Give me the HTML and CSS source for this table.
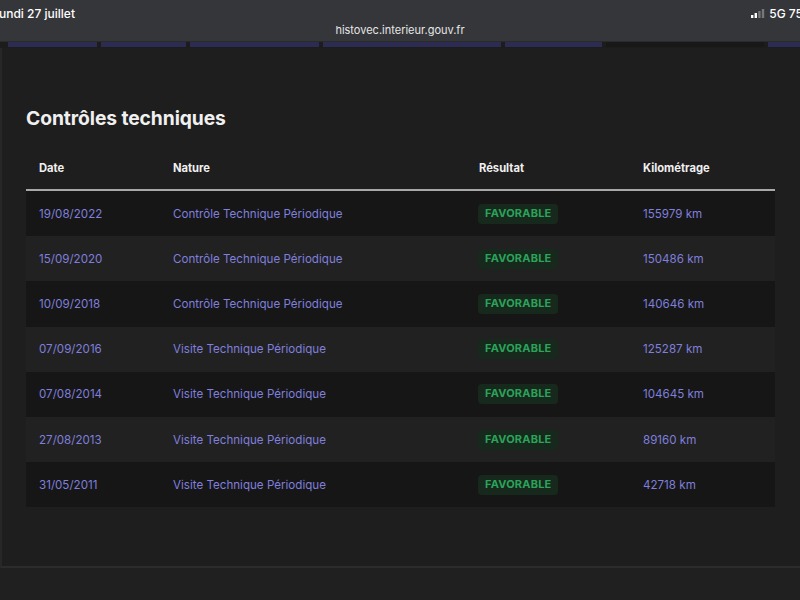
FILE: index.html
```html
<!DOCTYPE html>
<html lang="fr">
<head>
<meta charset="utf-8">
<title>HistoVec</title>
<link rel="stylesheet" href="styles.css">
</head>
<body>
<div class="status">
  <div class="status-row">
    <span class="date">undi 27 juillet</span>
    <span class="net">
      <svg class="bars" width="14" height="9" viewBox="0 0 14 9">
        <rect x="0" y="6" width="2.4" height="3" fill="#fff"/>
        <rect x="3.6" y="4" width="2.4" height="5" fill="#fff"/>
        <rect x="7.2" y="2" width="2.4" height="7" fill="#777"/>
        <rect x="10.8" y="0" width="2.4" height="9" fill="#777"/>
      </svg>
      5G 75
    </span>
  </div>
  <div class="url">histovec.interieur.gouv.fr</div>
</div>
<div class="tabs">
  <div class="tab t1"></div>
  <div class="tab t2"></div>
  <div class="tab t3"></div>
  <div class="tab t4"></div>
  <div class="tab t5"></div>
  <div class="tab off"></div>
  <div class="tab t6"></div>
</div>
<main class="panel">
  <h2 class="title">Contrôles techniques</h2>
  <table class="ct">
    <thead>
      <tr><th class="c1">Date</th><th class="c2">Nature</th><th class="c3">Résultat</th><th class="c4">Kilométrage</th></tr>
    </thead>
    <tbody>
      <tr><td>19/08/2022</td><td>Contrôle Technique Périodique</td><td><span class="badge">FAVORABLE</span></td><td>155979 km</td></tr>
      <tr><td>15/09/2020</td><td>Contrôle Technique Périodique</td><td><span class="badge">FAVORABLE</span></td><td>150486 km</td></tr>
      <tr><td>10/09/2018</td><td>Contrôle Technique Périodique</td><td><span class="badge">FAVORABLE</span></td><td>140646 km</td></tr>
      <tr><td>07/09/2016</td><td>Visite Technique Périodique</td><td><span class="badge">FAVORABLE</span></td><td>125287 km</td></tr>
      <tr><td>07/08/2014</td><td>Visite Technique Périodique</td><td><span class="badge">FAVORABLE</span></td><td>104645 km</td></tr>
      <tr><td>27/08/2013</td><td>Visite Technique Périodique</td><td><span class="badge">FAVORABLE</span></td><td>89160 km</td></tr>
      <tr><td>31/05/2011</td><td>Visite Technique Périodique</td><td><span class="badge">FAVORABLE</span></td><td>42718 km</td></tr>
    </tbody>
  </table>
</main>
<div class="footer"></div>
</body>
</html>
```
FILE: styles.css
```css
html, body {
  margin: 0;
  padding: 0;
  background: #202020;
  width: 800px;
  height: 600px;
  overflow: hidden;
  font-family: "Inter", "Liberation Sans", sans-serif;
}
.status {
  background: #35363a;
  height: 41px;
  color: #fff;
}
.status-row {
  display: flex;
  justify-content: space-between;
  align-items: center;
  height: 26px;
}
.date {
  font-size: 12px;
  font-weight: 500;
  margin-left: -1px;
}
.net {
  font-size: 12px;
  font-weight: 500;
  display: flex;
  align-items: center;
  gap: 4px;
  margin-right: -3px;
}
.url {
  text-align: center;
  font-size: 11px;
  color: #e6e6e6;
  line-height: 12px;
  margin-top: -2px;
}
.tabs {
  display: flex;
  height: 6px;
  background: #1c1c1c;
  gap: 4px;
  padding-left: 8px;
  border-top: 1px solid #2a2a2c;
}
.tab { background: #2c2b52; height: 5px; }
.t1 { width: 89px; }
.t2 { width: 85px; }
.t3 { width: 129px; }
.t4 { width: 178px; }
.t5 { width: 97px; }
.off { width: 158px; background: #181818; }
.t6 { flex: 1; }
.panel {
  background: #1e1e1e;
  border-left: 2px solid #272727;
  border-bottom: 2px solid #2c2c2c;
  height: 520px;
  padding: 0 24px;
  box-sizing: border-box;
  overflow: hidden;
}
.title {
  margin: 0;
  padding-top: 57px;
  font-size: 19.3px;
  line-height: 26px;
  font-weight: 700;
  color: #f0f0f0;
  letter-spacing: -0.1px;
}
.ct {
  margin-top: 15px;
  width: 749px;
  border-collapse: collapse;
  font-size: 11.6px;
}
.ct th {
  text-align: left;
  color: #f0f0f0;
  font-weight: 700;
  font-size: 11.2px;
  height: 43px;
  padding: 0 0 0 13px;
  border-bottom: 2px solid #a8a8a8;
  vertical-align: middle;
}
.c1 { width: 121px; }
.c2 { width: 293px; }
.c3 { width: 151px; }
.ct td {
  height: 45.2px;
  padding: 0 0 0 13px;
  color: #7f7fdc;
  vertical-align: middle;
}
.ct tbody tr:nth-child(odd) { background: #161616; }
.ct tbody tr:nth-child(even) { background: #212121; }
.badge {
  display: inline-block;
  background: #17281c;
  color: #2ba35a;
  font-weight: 700;
  font-size: 11px;
  letter-spacing: 0.2px;
  padding: 2px 7px 3px;
  border-radius: 4px;
  line-height: 15px;
  margin-left: -1px;
}
.footer {
  height: 31px;
}
```
